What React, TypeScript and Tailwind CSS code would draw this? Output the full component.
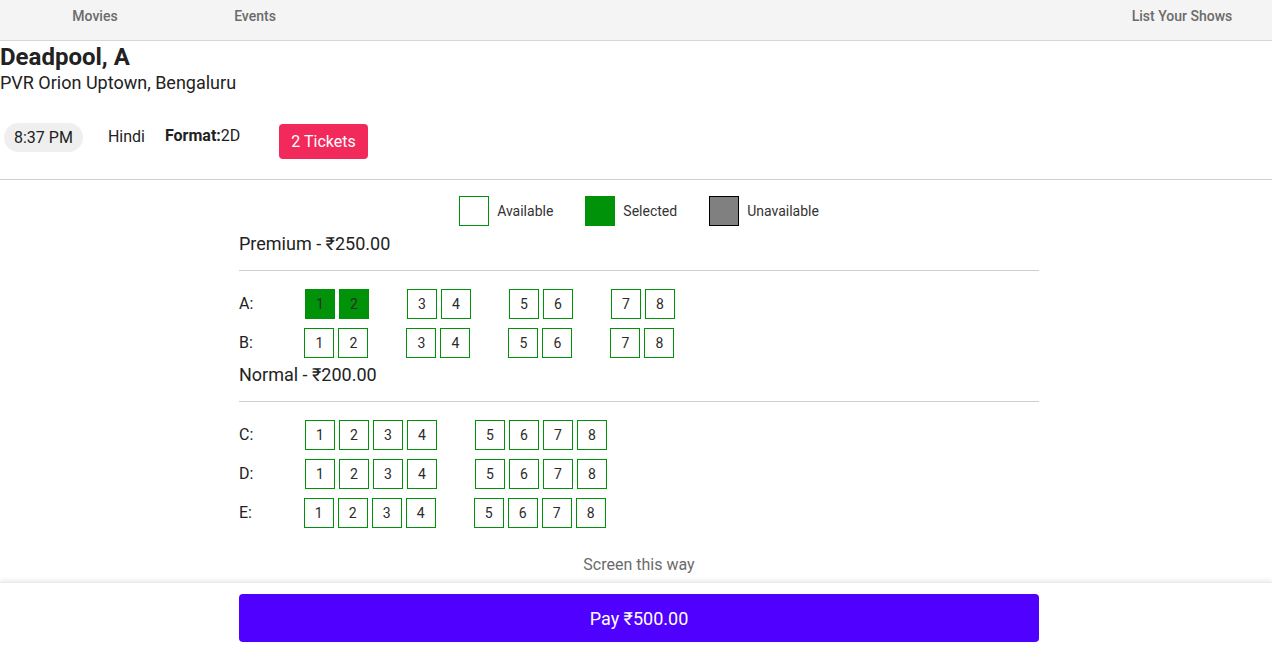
import React from "react";

const seatBase =
  "w-[30px] h-[30px] flex items-center justify-center text-[14px] text-[#2b2b2b]";

function Seat({ n, selected }: { n: number; selected?: boolean }) {
  return (
    <div
      className={
        seatBase +
        (selected
          ? " bg-[#009209] border border-[#009209]"
          : " bg-white border border-[#009209]")
      }
    >
      {n}
    </div>
  );
}

function Row({
  label,
  groups,
  selected = [],
}: {
  label: string;
  groups: number[][];
  selected?: number[];
}) {
  return (
    <div className="flex items-center h-[30px] mb-[9px]">
      <span className="text-[16px] text-[#222]">{label}</span>
      <div className="flex gap-[38px] ml-[51.6px]">
        {groups.map((g, i) => (
          <div key={i} className="flex gap-1">
            {g.map((n) => (
              <Seat key={n} n={n} selected={selected.includes(n)} />
            ))}
          </div>
        ))}
      </div>
    </div>
  );
}

export default function App() {
  const premium = [
    [1, 2],
    [3, 4],
    [5, 6],
    [7, 8],
  ];
  const normal = [
    [1, 2, 3, 4],
    [5, 6, 7, 8],
  ];
  return (
    <div
      className="w-[1272px] h-[653px] flex flex-col bg-white text-[#222] overflow-hidden"
      style={{ fontFamily: "Roboto, 'Noto Sans', sans-serif" }}
    >
      <header className="h-[41px] bg-[#f4f4f4] border-b border-[#d6d6d6] flex items-start pt-[6px] pl-[15px] pr-[10px] text-[14px] text-[#6b6b6b] font-medium">
        <div className="w-[160px] text-center">Movies</div>
        <div className="w-[160px] text-center">Events</div>
        <div className="flex-1" />
        <div className="w-[160px] text-center">List Your Shows</div>
      </header>

      <div className="pt-[2px]">
        <h1 className="text-[24px] font-bold leading-[29px] text-[#222]">
          Deadpool, A
        </h1>
        <div className="text-[18px] leading-[22px] text-[#222]">
          PVR Orion Uptown, Bengaluru
        </div>
        <div className="flex items-start mt-[29px] ml-[4px]">
          <div className="rounded-full bg-[#efefef] px-[10px] h-[29px] flex items-center text-[16px]">
            8:37 PM
          </div>
          <div className="ml-[25px] text-[16px] h-[27px] flex items-center">
            Hindi
          </div>
          <div className="ml-[20px] text-[16px] h-[25px] flex items-center">
            <b>Format:</b>2D
          </div>
          <button className="ml-[39px] mt-[1px] h-[35px] px-3 rounded-[4px] bg-[#f2295b] text-white text-[16px]">
            2 Tickets
          </button>
        </div>
        <div className="mt-[20px] border-b border-[#cfcfcf]" />
      </div>

      <div className="flex justify-center items-center gap-0 mt-[16px] pl-[6px] text-[14px] text-[#333]">
        <div className="w-[30px] h-[30px] border border-[#009209] bg-white" />
        <span className="ml-2">Available</span>
        <div className="ml-8 w-[30px] h-[30px] bg-[#009209]" />
        <span className="ml-2">Selected</span>
        <div className="ml-8 w-[30px] h-[30px] bg-[#808080] border border-black" />
        <span className="ml-2">Unavailable</span>
      </div>

      <div className="w-[800px] ml-[239px] mt-[8px]">
        <div className="text-[18px] leading-[20px]">Premium - ₹250.00</div>
        <div className="mt-[16px] mb-[18px] border-b border-[#cfcfcf]" />
        <Row label="A:" groups={premium} selected={[1, 2]} />
        <Row label="B:" groups={premium} />
        <div className="text-[18px] leading-[20px] -mt-[2px]">Normal - ₹200.00</div>
        <div className="mt-[16px] mb-[18px] border-b border-[#cfcfcf]" />
        <Row label="C:" groups={normal} />
        <Row label="D:" groups={normal} />
        <Row label="E:" groups={normal} />
        <div className="text-center text-[16px] text-[#6b6b6b] mt-[27px] leading-[20px]">
          Screen this way
        </div>
      </div>

      <div className="mt-auto h-[71px] bg-white shadow-[0_-2px_4px_rgba(0,0,0,0.08)] border-t border-[#ececec] flex pl-[239px] pt-[11px]">
        <button className="w-[800px] h-[48px] rounded-[4px] bg-[#4f00ff] text-white text-[18px]">
          Pay ₹500.00
        </button>
      </div>
    </div>
  );
}
